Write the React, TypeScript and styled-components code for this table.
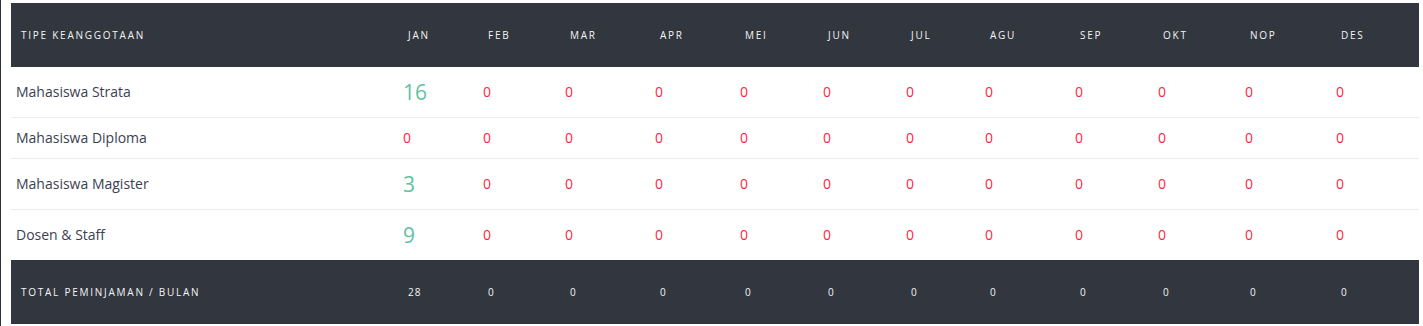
import React from 'react';
import styled, { createGlobalStyle } from 'styled-components';

const GlobalStyle = createGlobalStyle`
  html, body {
    margin: 0;
    padding: 0;
    background: #ffffff;
    font-family: 'Open Sans', 'Liberation Sans', sans-serif;
  }
`;

const Page = styled.div`
  min-height: 326px;
  box-sizing: border-box;
  padding: 3px 4px 0 10px;
  border-left: 1px solid #2f323a;
`;

const Table = styled.table`
  width: 1408px;
  border-collapse: collapse;
  table-layout: fixed;
`;

const HeadRow = styled.tr`
  background: #32363f;
`;

const HeadCell = styled.th`
  height: 64px;
  box-sizing: border-box;
  padding: 0 10px;
  text-align: left;
  vertical-align: middle;
  font-size: 10px;
  font-weight: 400;
  letter-spacing: 1.75px;
  text-transform: uppercase;
  color: #f4f4f4;
  white-space: nowrap;
`;

const FootCell = styled(HeadCell).attrs({ as: 'td' })<{ $num?: boolean }>`
  letter-spacing: ${p => (p.$num ? '1px' : '1.75px')};
`;

const BodyRow = styled.tr`
  border-bottom: 1px solid #ececec;
  &:last-child {
    border-bottom: none;
  }
`;

const NameCell = styled.td`
  padding: 10px 5px;
  font-size: 14px;
  line-height: 20px;
  color: #3c4150;
  vertical-align: middle;
`;

const ValueCell = styled.td<{ $big?: boolean }>`
  padding: 10px 5px;
  font-size: ${p => (p.$big ? '21px' : '14px')};
  line-height: ${p => (p.$big ? '30px' : '20px')};
  color: ${p => (p.$big ? '#62c1a3' : '#ff1f3f')};
  vertical-align: middle;
`;

const months = ['Jan', 'Feb', 'Mar', 'Apr', 'Mei', 'Jun', 'Jul', 'Agu', 'Sep', 'Okt', 'Nop', 'Des'];
const widths = [387, 80, 82, 90, 85, 83, 83, 79, 90, 83, 87, 91, 88];

const rows: { name: string; values: number[] }[] = [
  { name: 'Mahasiswa Strata', values: [16, 0, 0, 0, 0, 0, 0, 0, 0, 0, 0, 0] },
  { name: 'Mahasiswa Diploma', values: [0, 0, 0, 0, 0, 0, 0, 0, 0, 0, 0, 0] },
  { name: 'Mahasiswa Magister', values: [3, 0, 0, 0, 0, 0, 0, 0, 0, 0, 0, 0] },
  { name: 'Dosen & Staff', values: [9, 0, 0, 0, 0, 0, 0, 0, 0, 0, 0, 0] },
];

const totals = months.map((_, i) => rows.reduce((sum, r) => sum + r.values[i], 0));

export default function App() {
  return (
    <>
      <GlobalStyle />
      <Page>
        <Table>
          <colgroup>
            {widths.map((w, i) => (
              <col key={i} style={{ width: w }} />
            ))}
          </colgroup>
          <thead>
            <HeadRow>
              <HeadCell>Tipe Keanggotaan</HeadCell>
              {months.map(m => (
                <HeadCell key={m}>{m}</HeadCell>
              ))}
            </HeadRow>
          </thead>
          <tbody>
            {rows.map(r => (
              <BodyRow key={r.name}>
                <NameCell>{r.name}</NameCell>
                {r.values.map((v, i) => (
                  <ValueCell key={i} $big={v > 0}>
                    {v}
                  </ValueCell>
                ))}
              </BodyRow>
            ))}
          </tbody>
          <tfoot>
            <HeadRow>
              <FootCell>Total Peminjaman / Bulan</FootCell>
              {totals.map((t, i) => (
                <FootCell key={i} $num>
                  {t}
                </FootCell>
              ))}
            </HeadRow>
          </tfoot>
        </Table>
      </Page>
    </>
  );
}
